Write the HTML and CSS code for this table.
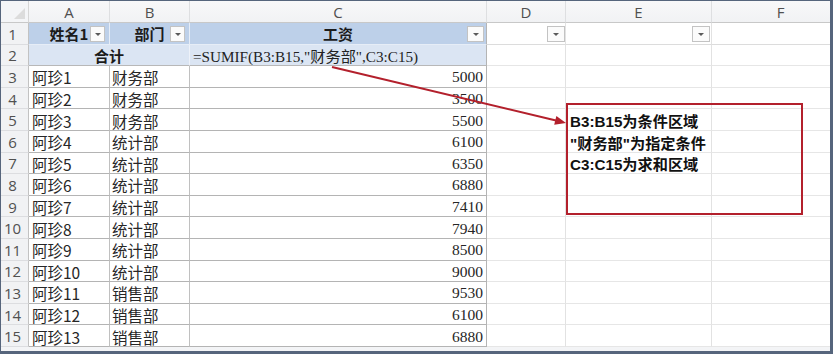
FILE: index.html
```html
<!DOCTYPE html>
<html lang="zh-CN">
<head>
<meta charset="utf-8">
<title>SUMIF 示例</title>
<link rel="stylesheet" href="styles.css">
</head>
<body>
<div class="frame">
  <div class="sheet">
    <!-- column headers -->
    <div class="corner"><span class="corner-tri"></span></div>
    <div class="colhead">A</div>
    <div class="colhead">B</div>
    <div class="colhead">C</div>
    <div class="colhead">D</div>
    <div class="colhead">E</div>
    <div class="colhead">F</div>

    <!-- row 1: table header -->
    <div class="rowhead">1</div>
    <div class="hd">姓名1<span class="dd dd-a"></span></div>
    <div class="hd">部门<span class="dd dd-a"></span></div>
    <div class="hd hd-last">工资<span class="dd dd-c"></span></div>
    <div class="blank top1">
      <span class="dd dd-d"></span>
    </div>
    <div class="blank top1"><span class="dd dd-e"></span></div>
    <div class="blank top1"></div>

    <!-- row 2: total -->
    <div class="rowhead">2</div>
    <div class="tot span2">合计</div>
    <div class="tot formula hd-last">=SUMIF(B3:B15,"财务部",C3:C15)</div>
    <div class="blank"></div>
    <div class="blank"></div>
    <div class="blank"></div>

    <div class="rowhead">3</div><div class="c name">阿珍1</div><div class="c dept">财务部</div><div class="c num">5000</div><div class="blank"></div><div class="blank"></div><div class="blank"></div>
    <div class="rowhead">4</div><div class="c name">阿珍2</div><div class="c dept">财务部</div><div class="c num">3500</div><div class="blank"></div><div class="blank"></div><div class="blank"></div>
    <div class="rowhead">5</div><div class="c name">阿珍3</div><div class="c dept">财务部</div><div class="c num">5500</div><div class="blank"></div><div class="blank"></div><div class="blank"></div>
    <div class="rowhead">6</div><div class="c name">阿珍4</div><div class="c dept">统计部</div><div class="c num">6100</div><div class="blank"></div><div class="blank"></div><div class="blank"></div>
    <div class="rowhead">7</div><div class="c name">阿珍5</div><div class="c dept">统计部</div><div class="c num">6350</div><div class="blank"></div><div class="blank"></div><div class="blank"></div>
    <div class="rowhead">8</div><div class="c name">阿珍6</div><div class="c dept">统计部</div><div class="c num">6880</div><div class="blank"></div><div class="blank"></div><div class="blank"></div>
    <div class="rowhead">9</div><div class="c name">阿珍7</div><div class="c dept">统计部</div><div class="c num">7410</div><div class="blank"></div><div class="blank"></div><div class="blank"></div>
    <div class="rowhead">10</div><div class="c name">阿珍8</div><div class="c dept">统计部</div><div class="c num">7940</div><div class="blank"></div><div class="blank"></div><div class="blank"></div>
    <div class="rowhead">11</div><div class="c name">阿珍9</div><div class="c dept">统计部</div><div class="c num">8500</div><div class="blank"></div><div class="blank"></div><div class="blank"></div>
    <div class="rowhead">12</div><div class="c name">阿珍10</div><div class="c dept">统计部</div><div class="c num">9000</div><div class="blank"></div><div class="blank"></div><div class="blank"></div>
    <div class="rowhead">13</div><div class="c name">阿珍11</div><div class="c dept">销售部</div><div class="c num">9530</div><div class="blank"></div><div class="blank"></div><div class="blank"></div>
    <div class="rowhead">14</div><div class="c name">阿珍12</div><div class="c dept">销售部</div><div class="c num">6100</div><div class="blank"></div><div class="blank"></div><div class="blank"></div>
    <div class="rowhead">15</div><div class="c name">阿珍13</div><div class="c dept">销售部</div><div class="c num">6880</div><div class="blank"></div><div class="blank"></div><div class="blank"></div>
  </div>

  <!-- callout arrow from the formula to the note -->
  <svg class="arrow" width="833" height="354" viewBox="0 0 833 354">
    <line x1="332" y1="67" x2="556" y2="120.5" stroke="#b3202c" stroke-width="2"/>
    <polygon points="566,123 554.2,124.8 556.4,116.1" fill="#b3202c"/>
  </svg>

  <div class="note">
    <div>B3:B15为条件区域</div>
    <div>"财务部"为指定条件</div>
    <div>C3:C15为求和区域</div>
  </div>
</div>
</body>
</html>
```

FILE: styles.css
```css
* { box-sizing: border-box; }

html, body {
  margin: 0;
  padding: 0;
  background: #ffffff;
}

.frame {
  position: relative;
  width: 833px;
  height: 354px;
  overflow: hidden;
  border-style: solid;
  border-color: #56657c;
  border-width: 1px 3px 3px 1px;
  background: #f3f4f6;
}

.sheet {
  display: grid;
  grid-template-columns: 28px 81px 80px 297px 79px 146px 138px;
  grid-template-rows: 22px repeat(15, 21.6px);
  background: #ffffff;
  font-family: "Noto Sans CJK SC", "Noto Sans", sans-serif;
  font-size: 15.5px;
  color: #222;
}

.sheet > div {
  position: relative;
  display: flex;
  align-items: center;
  white-space: nowrap;
  overflow: hidden;
}

/* headers */
.corner {
  background: #f4f5f7;
  border-right: 1px solid #d6d6d6;
  border-bottom: 1px solid #c8c8c8;
}
.corner-tri {
  position: absolute;
  right: 3px;
  bottom: 3px;
  width: 0;
  height: 0;
  border-style: solid;
  border-width: 0 0 11px 11px;
  border-color: transparent transparent #dcdcdc transparent;
}

.colhead {
  justify-content: center;
  background: linear-gradient(#f8f8f9, #f1f2f4);
  border-right: 1px solid #dedfe1;
  border-bottom: 1px solid #c8c8c8;
  font-family: "Open Sans", "Noto Sans", sans-serif;
  font-size: 15px;
  color: #505050;
  padding-top: 1px;
}

.rowhead {
  justify-content: center;
  padding-right: 4px;
  background: #f1f2f4;
  border-right: 1px solid #c2c2c2;
  border-bottom: 1px solid #dcdde0;
  font-family: "Open Sans", "Noto Sans", sans-serif;
  font-size: 15px;
  color: #505050;
  padding-top: 1px;
}

/* table header row */
.hd {
  justify-content: center;
  background: #bdd0e9;
  border-right: 1px solid #e6edf7;
  border-bottom: 1px solid #e6edf7;
  font-weight: 700;
  font-size: 15px;
  color: #1b1b1b;
  padding-top: 1px;
}
.hd-last { border-right: 1px solid #b4b4b4; }

.tot {
  background: #dbe5f3;
  border-right: 1px solid #eef2f9;
  border-bottom: 1px solid #b8b8b8;
  justify-content: center;
  font-weight: 700;
  font-size: 15px;
  color: #1b1b1b;
  padding-top: 1px;
}
.span2 { grid-column: span 2; }
.formula {
  justify-content: flex-start;
  padding-left: 3px;
  font-family: "Liberation Serif", "Noto Sans CJK SC", serif;
  font-weight: 400;
  font-size: 15.2px;
  color: #222;
  border-right: 1px solid #b4b4b4;
}

/* filter buttons */
.dd {
  position: absolute;
  top: 3px;
  width: 15px;
  height: 16px;
  background: #fbfbfb;
  border: 1px solid #c3c3c3;
}
.dd::after {
  content: "";
  position: absolute;
  left: 4px;
  top: 6px;
  border-style: solid;
  border-width: 3px 3px 0 3px;
  border-color: #5a5a5a transparent transparent transparent;
}
.dd-a { right: 4px; }
.dd-c { right: 2px; width: 17px; }
.dd-d { right: 0; width: 18px; }
.dd-e { right: 1px; width: 18px; }
.dd-d::after, .dd-e::after, .dd-c::after { left: 5px; }

/* data cells */
.c {
  border-right: 1px solid #c0c0c0;
  border-bottom: 1px solid #b4b4b4;
  padding-top: 2px;
  color: #262626;
}
.name { padding-left: 3px; }
.dept { padding-left: 2px; }
.num {
  justify-content: flex-end;
  padding-right: 3px;
  font-family: "Liberation Serif", serif;
  font-size: 15.5px;
  border-right: 1px solid #b4b4b4;
}

.blank {
  background: #ffffff;
  border-right: 1px solid #e2e2e2;
  border-bottom: 1px solid #e6e6e6;
}
.top1 { border-bottom: 1px solid #dcdcdc; }

/* annotation overlay */
.arrow {
  position: absolute;
  left: -1px;
  top: -1px;
  pointer-events: none;
}

.note {
  position: absolute;
  left: 565px;
  top: 102px;
  width: 237px;
  height: 112px;
  border: 2px solid #b3202c;
  padding: 6px 2px 0 2px;
  font-family: "Liberation Sans", "Noto Sans CJK SC", sans-serif;
  font-weight: 700;
  font-size: 15.2px;
  line-height: 21.5px;
  color: #111;
}
```
